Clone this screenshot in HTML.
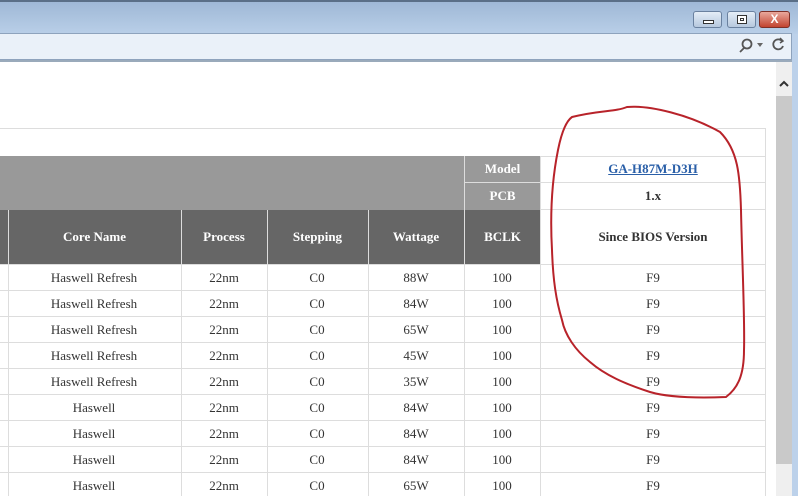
<!DOCTYPE html><html><head><style>
body{margin:0;width:798px;height:496px;overflow:hidden;background:#fff;position:relative;font-family:"Liberation Serif",serif;}
div{position:absolute;box-sizing:border-box}
.h{color:#fff;font-weight:bold;font-size:13px;text-align:center}
</style></head><body>
<div style="left:0;top:0;width:798px;height:34px;background:linear-gradient(#9fb8d6,#b9cfe8);border-top:2px solid #5a6f87"></div>
<div style="left:693px;top:11px;width:29px;height:17px;border:1px solid #6a819f;border-radius:3px;background:linear-gradient(#e4edf7,#b6c8de)"><div style="left:9px;top:8px;width:11px;height:4px;border:1px solid #333;background:#fff"></div></div>
<div style="left:727px;top:11px;width:29px;height:17px;border:1px solid #6a819f;border-radius:3px;background:linear-gradient(#e4edf7,#b6c8de)"><div style="left:9px;top:3px;width:10px;height:9px;border:1px solid #333;background:#fff"><div style="left:2px;top:2px;width:4px;height:3px;border:1px solid #333"></div></div></div>
<div style="left:759px;top:11px;width:31px;height:17px;border:1px solid #7d3028;border-radius:3px;background:linear-gradient(#e9a89c,#c2432f);color:#fff;font:bold 12px 'Liberation Sans',sans-serif;text-align:center;line-height:15px">X</div>
<div style="left:0;top:33px;width:792px;height:27px;border:1px solid #8ea3bd;border-left:0;background:#eaf1f9"></div>
<div style="left:0;top:60px;width:792px;height:2px;background:#9aaabb"></div>
<div style="left:792px;top:34px;width:6px;height:462px;background:#bcd1ea"></div>
<div style="left:776px;top:62px;width:16px;height:434px;background:#efefef"></div>
<div style="left:776px;top:96px;width:16px;height:368px;background:#c9c9c9"></div>
<div style="left:0;top:128px;width:766px;height:368px;border-top:1px solid #ddd;border-right:1px solid #ddd"></div>
<div style="left:0;top:156px;width:540px;height:54px;background:#999"></div>
<div style="left:464px;top:156px;width:77px;height:54px;border-left:1px solid #ddd"></div>
<div style="left:464px;top:182px;width:77px;height:1px;background:#ddd"></div>
<div class="h" style="left:465px;top:156px;width:75px;line-height:26px">Model</div>
<div class="h" style="left:465px;top:183px;width:75px;line-height:26px">PCB</div>
<div style="left:541px;top:156px;width:225px;height:1px;background:#ddd"></div>
<div style="left:541px;top:182px;width:225px;height:1px;background:#ddd"></div>
<div style="left:541px;top:209px;width:225px;height:1px;background:#ddd"></div>
<div style="left:541px;top:156px;width:224px;line-height:26px;text-align:center;font-size:13px;font-weight:bold;color:#2a5fa8;text-decoration:underline">GA-H87M-D3H</div>
<div style="left:541px;top:183px;width:224px;line-height:26px;text-align:center;font-size:13px;font-weight:bold;color:#333">1.x</div>
<div style="left:0;top:210px;width:541px;height:54px;background:#666"></div>
<div style="left:541px;top:210px;width:224px;line-height:54px;text-align:center;font-size:13px;font-weight:bold;color:#333">Since BIOS Version</div>
<div class="h" style="left:8px;top:210px;width:173px;line-height:54px">Core Name</div>
<div class="h" style="left:181px;top:210px;width:86px;line-height:54px">Process</div>
<div class="h" style="left:267px;top:210px;width:101px;line-height:54px">Stepping</div>
<div class="h" style="left:368px;top:210px;width:96px;line-height:54px">Wattage</div>
<div class="h" style="left:464px;top:210px;width:77px;line-height:54px">BCLK</div>
<svg style="position:absolute;left:0;top:0" width="798" height="496">
<g fill="none" stroke="#555" stroke-width="1.8">
<circle cx="747" cy="44" r="4.5"/><line x1="744" y1="48" x2="740" y2="52"/>
<path d="M782,41 A5,5 0 1 0 783,46"/><path d="M780,38 l3,3 l-3,2" stroke-width="1.5"/>
<path d="M780,86 l4,-4 l4,4" stroke="#333" stroke-width="2"/>
</g>
<path d="M757,43 h6 l-3,4 z" fill="#666"/>
<g stroke="#ddd" stroke-width="1">
<line x1="8.5" y1="210" x2="8.5" y2="496"/><line x1="181.5" y1="210" x2="181.5" y2="496"/><line x1="267.5" y1="210" x2="267.5" y2="496"/><line x1="368.5" y1="210" x2="368.5" y2="496"/><line x1="464.5" y1="210" x2="464.5" y2="496"/><line x1="540.5" y1="156" x2="540.5" y2="496"/>
<line x1="0" y1="264.5" x2="766" y2="264.5"/><line x1="0" y1="290.5" x2="766" y2="290.5"/><line x1="0" y1="316.5" x2="766" y2="316.5"/><line x1="0" y1="342.5" x2="766" y2="342.5"/><line x1="0" y1="368.5" x2="766" y2="368.5"/><line x1="0" y1="394.5" x2="766" y2="394.5"/><line x1="0" y1="420.5" x2="766" y2="420.5"/><line x1="0" y1="446.5" x2="766" y2="446.5"/><line x1="0" y1="472.5" x2="766" y2="472.5"/>
</g>
<g font-family="Liberation Serif" font-size="13" fill="#333" text-anchor="middle">
<text x="94" y="282">Haswell Refresh</text><text x="224" y="282">22nm</text><text x="317" y="282">C0</text><text x="416" y="282">88W</text><text x="502" y="282">100</text><text x="653" y="282">F9</text>
<text x="94" y="308">Haswell Refresh</text><text x="224" y="308">22nm</text><text x="317" y="308">C0</text><text x="416" y="308">84W</text><text x="502" y="308">100</text><text x="653" y="308">F9</text>
<text x="94" y="334">Haswell Refresh</text><text x="224" y="334">22nm</text><text x="317" y="334">C0</text><text x="416" y="334">65W</text><text x="502" y="334">100</text><text x="653" y="334">F9</text>
<text x="94" y="360">Haswell Refresh</text><text x="224" y="360">22nm</text><text x="317" y="360">C0</text><text x="416" y="360">45W</text><text x="502" y="360">100</text><text x="653" y="360">F9</text>
<text x="94" y="386">Haswell Refresh</text><text x="224" y="386">22nm</text><text x="317" y="386">C0</text><text x="416" y="386">35W</text><text x="502" y="386">100</text><text x="653" y="386">F9</text>
<text x="94" y="412">Haswell</text><text x="224" y="412">22nm</text><text x="317" y="412">C0</text><text x="416" y="412">84W</text><text x="502" y="412">100</text><text x="653" y="412">F9</text>
<text x="94" y="438">Haswell</text><text x="224" y="438">22nm</text><text x="317" y="438">C0</text><text x="416" y="438">84W</text><text x="502" y="438">100</text><text x="653" y="438">F9</text>
<text x="94" y="464">Haswell</text><text x="224" y="464">22nm</text><text x="317" y="464">C0</text><text x="416" y="464">84W</text><text x="502" y="464">100</text><text x="653" y="464">F9</text>
<text x="94" y="490">Haswell</text><text x="224" y="490">22nm</text><text x="317" y="490">C0</text><text x="416" y="490">65W</text><text x="502" y="490">100</text><text x="653" y="490">F9</text>
</g>
<path d="M572,117 C600,110 615,112 627,107 C650,105 690,115 720,132 C738,150 740,175 741,210 C742,260 745,320 744,350 C744,375 738,388 726,397 C700,398 670,398 650,392 C625,384 605,375 590,362 C575,350 565,335 562,320 C556,300 553,280 552,250 C550,215 552,180 558,150 C561,135 565,122 572,117 Z" fill="none" stroke="#b8232a" stroke-width="2"/>
</svg>
</body></html>
